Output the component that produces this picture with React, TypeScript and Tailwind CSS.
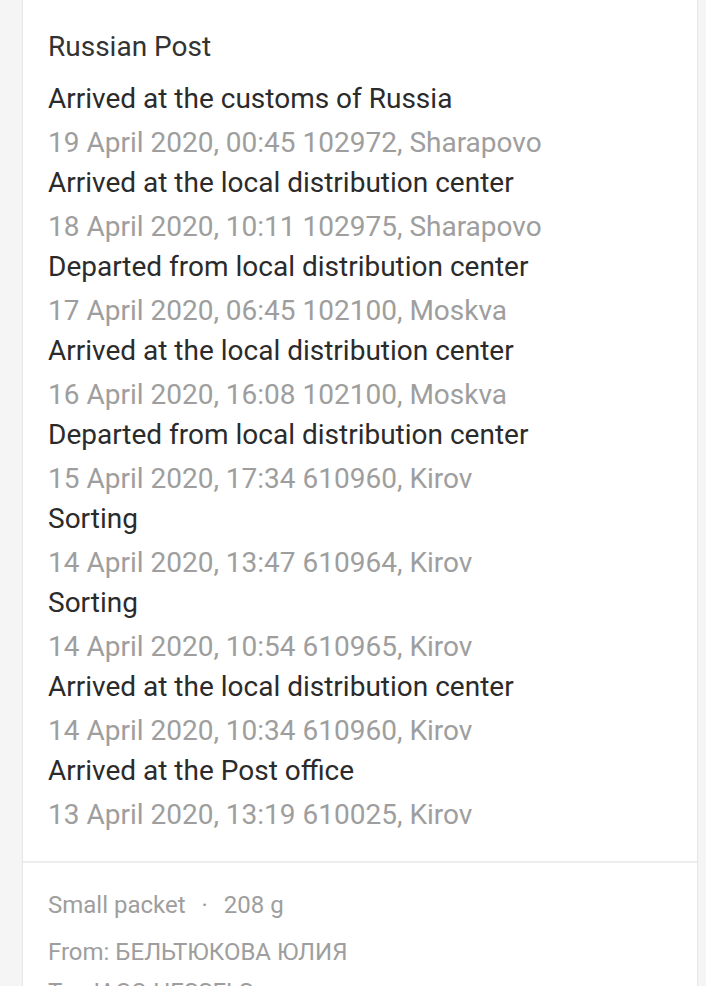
import React from "react";

const events = [
  { title: "Arrived at the customs of Russia", date: "19 April 2020, 00:45 102972, Sharapovo" },
  { title: "Arrived at the local distribution center", date: "18 April 2020, 10:11 102975, Sharapovo" },
  { title: "Departed from local distribution center", date: "17 April 2020, 06:45 102100, Moskva" },
  { title: "Arrived at the local distribution center", date: "16 April 2020, 16:08 102100, Moskva" },
  { title: "Departed from local distribution center", date: "15 April 2020, 17:34 610960, Kirov" },
  { title: "Sorting", date: "14 April 2020, 13:47 610964, Kirov" },
  { title: "Sorting", date: "14 April 2020, 10:54 610965, Kirov" },
  { title: "Arrived at the local distribution center", date: "14 April 2020, 10:34 610960, Kirov" },
  { title: "Arrived at the Post office", date: "13 April 2020, 13:19 610025, Kirov" },
];

export default function App() {
  return (
    <div
      className="h-[986px] overflow-hidden bg-[#f5f5f5] pl-[23px] pr-[9px]"
      style={{ fontFamily: "Roboto, 'Noto Sans', sans-serif" }}
    >
      <div className="bg-white shadow-[0_0_2px_rgba(0,0,0,0.18)]">
        <div className="px-[25px] pt-[27px] pb-[26px]">
          <div className="text-[28px] leading-[40px] text-[#333333]">Russian Post</div>
          <div className="mt-3">
            {events.map((e, i) => (
              <div key={i}>
                <div className="text-[28px] leading-[40px] text-[#2b2b2b]">{e.title}</div>
                <div className="mt-1 text-[28px] leading-[40px] text-[#9e9e9e]">{e.date}</div>
              </div>
            ))}
          </div>
        </div>
        <div className="h-[2px] bg-[#ececec]" />
        <div className="px-[25px] pt-[26px] pb-6 text-[24px] text-[#9e9e9e]">
          <div className="flex items-center leading-[32px]">
            <span>Small packet</span>
            <span className="mx-4">·</span>
            <span>208 g</span>
          </div>
          <div className="mt-[15px] leading-[32px]">From: БЕЛЬТЮКОВА ЮЛИЯ</div>
          <div className="mt-[8px] leading-[32px]">To: JACO HESSELS</div>
        </div>
      </div>
    </div>
  );
}
